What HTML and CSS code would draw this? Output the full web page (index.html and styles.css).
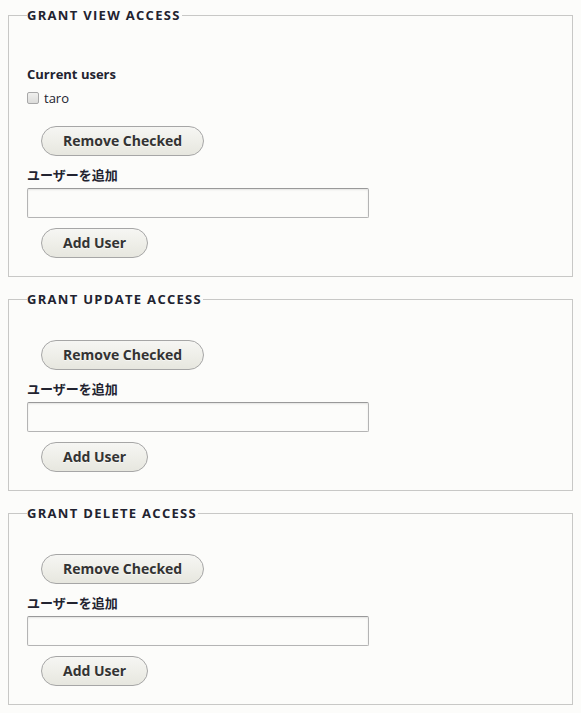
FILE: index.html
```html
<!DOCTYPE html>
<html lang="ja">
<head>
<meta charset="utf-8">
<title>Grant access</title>
<link rel="stylesheet" href="styles.css">
</head>
<body>
<fieldset class="box">
  <legend class="box-legend">Grant view access</legend>
  <div class="box-body">
    <div class="current">
      <div class="current-label">Current users</div>
      <label class="check-row"><input type="checkbox" class="check"><span>taro</span></label>
    </div>
    <button class="btn">Remove Checked</button>
    <label class="field-label">ユーザーを追加</label>
    <input type="text" class="text-input">
    <button class="btn">Add User</button>
  </div>
</fieldset>
<fieldset class="box">
  <legend class="box-legend">Grant update access</legend>
  <div class="box-body">
    <button class="btn">Remove Checked</button>
    <label class="field-label">ユーザーを追加</label>
    <input type="text" class="text-input">
    <button class="btn">Add User</button>
  </div>
</fieldset>
<fieldset class="box">
  <legend class="box-legend">Grant delete access</legend>
  <div class="box-body">
    <button class="btn">Remove Checked</button>
    <label class="field-label">ユーザーを追加</label>
    <input type="text" class="text-input">
    <button class="btn">Add User</button>
  </div>
</fieldset>
</body>
</html>
```
FILE: styles.css
```css
html, body {
  background: #fcfcfa;
}
body {
  margin: 8px;
  color: #222330;
  font-family: "Open Sans", "Noto Sans CJK JP", sans-serif;
  font-size: 13px;
}
.box {
  margin: 0 0 15px;
  padding: 0 18px 18px;
  border: 1px solid #c8c8c6;
  background: #fcfcfa;
  min-width: 0;
}
.box-legend {
  padding: 0 1px 0 0;
  margin-left: 0;
  font-size: 13px;
  line-height: 14px;
  font-weight: 700;
  text-transform: uppercase;
  letter-spacing: 0.1em;
  color: #222330;
}
.box-body {
  display: flex;
  flex-direction: column;
  align-items: flex-start;
  padding-top: 34px;
}
.current {
  margin-top: 9px;
  margin-bottom: 19px;
  display: flex;
  flex-direction: column;
  align-items: flex-start;
}
.current-label {
  font-weight: 700;
  line-height: 18px;
}
.check-row {
  margin-top: 6px;
  display: flex;
  align-items: center;
  gap: 5px;
  line-height: 18px;
  color: #222330;
}
.check {
  appearance: none;
  -webkit-appearance: none;
  margin: 0;
  width: 12px;
  height: 12px;
  border: 1px solid #a8a8a8;
  border-radius: 2px;
  background: linear-gradient(#f0f0ee, #dcdcda);
}
.btn {
  margin-left: 14px;
  height: 30px;
  padding: 0 21px;
  border: 1px solid #a6a6a6;
  border-radius: 20em;
  background: linear-gradient(#f6f6f3, #e7e7df);
  color: #333;
  font-family: "Open Sans", sans-serif;
  font-size: 14px;
  font-weight: 700;
  text-shadow: 0 1px rgba(255,255,255,0.6);
  line-height: 28px;
}
.field-label {
  margin-top: 10px;
  font-weight: 700;
  line-height: 18px;
  font-family: "Open Sans", "Noto Sans CJK JP", sans-serif;
}
.text-input {
  margin: 4px 0 0;
  box-sizing: border-box;
  width: 342px;
  height: 30px;
  border: 1px solid #b4b4b4;
  border-top-color: #999;
  border-radius: 2px;
  background: #fcfcfa;
  box-shadow: inset 0 1px 2px rgba(0,0,0,0.1);
  padding: 3px 4px;
  font-size: 13px;
}
.text-input + .btn {
  margin-top: 10px;
}
```
